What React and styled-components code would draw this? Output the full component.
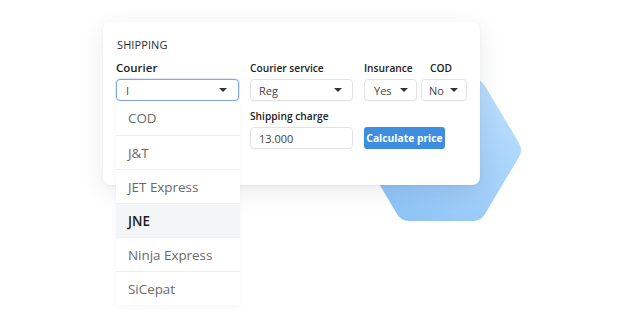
import React from "react";
import styled, { createGlobalStyle } from "styled-components";

const GlobalStyle = createGlobalStyle`
  html, body {
    margin: 0;
    padding: 0;
    background: #ffffff;
    font-family: "Open Sans", "Noto Sans", sans-serif;
  }
`;

const couriers = ["COD", "J&T", "JET Express", "JNE", "Ninja Express", "SiCepat"];

const Page = styled.div`
  position: relative;
  width: 622px;
  height: 317px;
  overflow: hidden;
  padding: 22px 0 0 103px;
  box-sizing: border-box;
`;

const Hexagon = styled.svg`
  position: absolute;
  left: 353px;
  top: 72px;
  width: 176px;
  height: 156px;
`;

const Card = styled.div`
  position: relative;
  width: 377px;
  height: 163px;
  box-sizing: border-box;
  padding: 16px 13px 0 13px;
  background: #ffffff;
  border-radius: 8px;
  box-shadow: 0 6px 22px rgba(40, 50, 70, 0.1), 0 1px 3px rgba(40, 50, 70, 0.05);
`;

const Title = styled.div`
  font-size: 11px;
  color: #2c2c2c;
  letter-spacing: 0.1px;
  margin-left: 1px;
  line-height: 14px;
`;

const Row = styled.div`
  display: flex;
  align-items: flex-start;
  margin-top: ${(p) => p.top || 0}px;
`;

const Field = styled.div`
  position: relative;
  display: flex;
  flex-direction: column;
  width: ${(p) => p.w}px;
  margin-left: ${(p) => p.gap || 0}px;
`;

const Label = styled.div`
  font-size: ${(p) => (p.big ? 11.5 : 10.2)}px;
  font-weight: 600;
  color: #222;
  line-height: 14px;
  height: 14px;
  margin-bottom: 4px;
  padding-left: ${(p) => p.indent || 0}px;
`;

const Select = styled.div`
  height: 22px;
  box-sizing: border-box;
  border: 1px solid ${(p) => (p.active ? "#7fa9e6" : "#e3e3e3")};
  border-radius: 4px;
  display: flex;
  align-items: center;
  justify-content: space-between;
  padding: 0 ${(p) => p.pr || 10}px 0 ${(p) => p.pl || 8}px;
  font-size: 11px;
  color: #444;
  background: #fff;
  box-shadow: ${(p) => (p.active ? "0 0 0 1px rgba(127,169,230,0.25)" : "0 1px 1px rgba(0,0,0,0.03)")};
`;

const Caret = styled.span`
  width: 0;
  height: 0;
  border-left: 4px solid transparent;
  border-right: 4px solid transparent;
  border-top: 4px solid #333;
`;

const Input = styled.div`
  height: 22px;
  box-sizing: border-box;
  border: 1px solid #e3e3e3;
  border-radius: 4px;
  display: flex;
  align-items: center;
  padding-left: 8px;
  font-size: 11px;
  color: #444;
`;

const Button = styled.button`
  height: 22px;
  width: 81px;
  margin-left: 11px;
  margin-top: 18px;
  border: none;
  border-radius: 3px;
  background: #3e8ddf;
  color: #fff;
  font-family: inherit;
  font-size: 10.3px;
  font-weight: 700;
  padding: 0;
  white-space: nowrap;
`;

const Dropdown = styled.ul`
  position: absolute;
  left: 0;
  top: 40px;
  width: 124px;
  margin: 0;
  padding: 0;
  list-style: none;
  background: #fff;
  z-index: 2;
  box-shadow: 0 2px 6px rgba(0, 0, 0, 0.04);
`;

const Option = styled.li`
  height: 34px;
  display: flex;
  align-items: center;
  padding-left: 12px;
  font-size: 13.4px;
  box-sizing: border-box;
  border-top: ${(p) => (p.first ? "none" : "1px solid #efefef")};
  color: ${(p) => (p.selected ? "#1e1e1e" : "#6a6a6a")};
  font-weight: ${(p) => (p.selected ? 600 : 400)};
  background: ${(p) => (p.selected ? "#f4f5f7" : "#fff")};
`;

export default function App() {
  return (
    <>
      <GlobalStyle />
      <Page>
        <Hexagon viewBox="0 0 176 156">
          <defs>
            <linearGradient id="hexFill" x1="0" y1="1" x2="1" y2="0">
              <stop offset="0" stopColor="#86bff5" />
              <stop offset="1" stopColor="#c0e0fd" />
            </linearGradient>
          </defs>
          <path
            d="M56 7 H120 Q128 7 132 14 L166 71 Q170 78 166 85 L132 142 Q128 149 120 149 H56 Q48 149 44 142 L10 85 Q6 78 10 71 L44 14 Q48 7 56 7 Z"
            fill="url(#hexFill)"
          />
        </Hexagon>
        <Card>
          <Title>SHIPPING</Title>
          <Row top={9}>
            <Field w={123}>
              <Label big>Courier</Label>
              <Select active pl={9} pr={11}>
                <span>I</span>
                <Caret />
              </Select>
              <Dropdown>
                {couriers.map((c, i) => (
                  <Option key={c} first={i === 0} selected={c === "JNE"}>
                    {c}
                  </Option>
                ))}
              </Dropdown>
            </Field>
            <Field gap={11}>
              <Row>
                <Field w={103}>
                  <Label>Courier service</Label>
                  <Select>
                    <span>Reg</span>
                    <Caret />
                  </Select>
                </Field>
                <Field w={53} gap={11}>
                  <Label>Insurance</Label>
                  <Select pl={9} pr={8}>
                    <span>Yes</span>
                    <Caret />
                  </Select>
                </Field>
                <Field w={46} gap={4}>
                  <Label indent={9}>COD</Label>
                  <Select pl={7} pr={8}>
                    <span>No</span>
                    <Caret />
                  </Select>
                </Field>
              </Row>
              <Row top={8}>
                <Field w={103}>
                  <Label>Shipping charge</Label>
                  <Input>13.000</Input>
                </Field>
                <Button>Calculate price</Button>
              </Row>
            </Field>
          </Row>
        </Card>
      </Page>
    </>
  );
}
